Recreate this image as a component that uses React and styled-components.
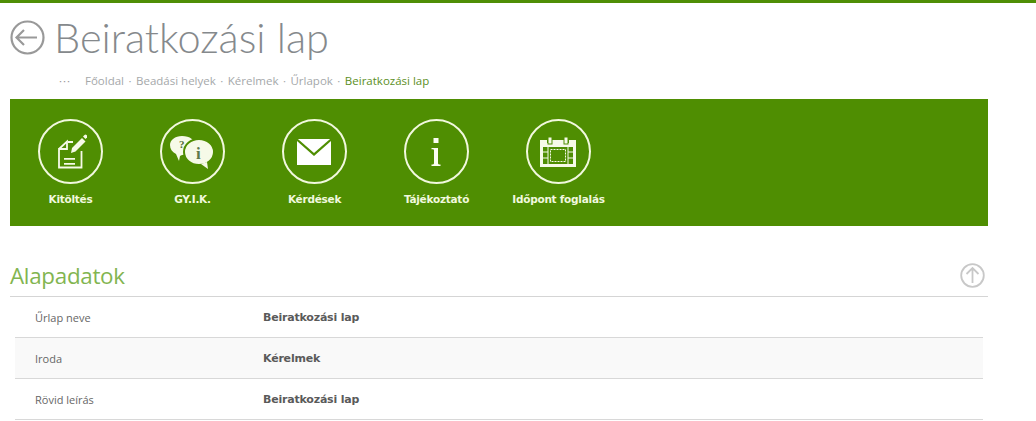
import React from 'react'
import styled, { createGlobalStyle } from 'styled-components'

const GlobalStyle = createGlobalStyle`
  html, body {
    margin: 0;
    padding: 0;
    background: #fff;
    overflow: hidden;
  }
  body {
    font-family: "Open Sans", "Liberation Sans", sans-serif;
  }
`

const Page = styled.div`
  width: 1036px;
  height: 421px;
  overflow: hidden;
  border-top: 3px solid #4f8e06;
  box-sizing: border-box;
`

const Content = styled.div`
  width: 978px;
  margin-left: 10px;
`

const Header = styled.header`
  display: flex;
  align-items: center;
  height: 68px;
  gap: 10px;
`

const BackIcon = styled.svg`
  width: 35px;
  height: 35px;
  flex: none;
`

const Title = styled.h1`
  margin: 0 0 0 -1px;
  font-family: Lato, "Open Sans", sans-serif;
  font-weight: 300;
  font-size: 41.500px;
  line-height: 70px;
  color: #85898c;
`

const Breadcrumb = styled.nav`
  display: flex;
  align-items: center;
  height: 18px;
  padding: 0 0 10px 49px;
  font-size: 11.500px;
  color: #a5a8aa;
`

const Dots = styled.span`
  width: 26px;
  letter-spacing: 1px;
  color: #999;
`

const Crumb = styled.span`
  color: ${p => (p.$active ? '#5c8f25' : '#a5a8aa')};
`

const Sep = styled.span`
  width: 12px;
  text-align: center;
  color: #a5a8aa;
`

const Band = styled.div`
  display: grid;
  grid-template-columns: repeat(5, 120px);
  column-gap: 2px;
  height: 127px;
  background: #4f8e02;
`

const Item = styled.a`
  display: flex;
  flex-direction: column;
  align-items: center;
  padding-top: 20px;
  color: #f1f8de;
  font-family: "DejaVu Sans", sans-serif;
  font-size: 10.500px;
  font-weight: 700;
  letter-spacing: -0.25px;
`

const Circle = styled.span`
  display: flex;
  align-items: center;
  justify-content: center;
  box-sizing: border-box;
  width: 65px;
  height: 65px;
  margin-bottom: 8px;
  border: 2px solid #f1f8de;
  border-radius: 50%;
`

const Label = styled.span`
  padding-left: 1px;
  line-height: 15px;
  white-space: nowrap;
`

const SectionHead = styled.div`
  display: flex;
  align-items: center;
  justify-content: space-between;
  box-sizing: border-box;
  height: 71px;
  padding-top: 28px;
  border-bottom: 1px solid #d5d5d5;
`

const SectionTitle = styled.h2`
  margin: 0;
  font-family: "Open Sans", sans-serif;
  font-weight: 400;
  font-size: 22.400px;
  letter-spacing: -0.3px;
  color: #82b550;
`

const UpIcon = styled.svg`
  width: 25px;
  height: 25px;
  margin-right: 3px;
`

const Rows = styled.div`
  margin: 0 5px;
`

const Row = styled.div`
  display: grid;
  grid-template-columns: 228px 1fr;
  align-items: center;
  box-sizing: border-box;
  height: 41px;
  padding-left: 20px;
  border-bottom: 1px solid #d8d8d8;
  background: ${p => (p.$alt ? '#f9f9f9' : '#fff')};
  font-family: "DejaVu Sans", sans-serif;
  font-size: 11px;
`

const Key = styled.span`
  font-family: "Open Sans", sans-serif;
  font-size: 11px;
  color: #666;
`

const Value = styled.span`
  font-weight: 700;
  letter-spacing: -0.2px;
  color: #5a5a5a;
`

const FillIcon = () => (
  <svg width="34" height="38" viewBox="0 0 34 38" fill="none">
    <path d="M15 9H20M6 16L14 8.500V16H6V34.500H28.500V18" stroke="#f6fae8" strokeWidth="1.800" />
    <path d="M11 25h11v1.800H11zM11 30h11v1.800H11z" fill="#f6fae8" />
    <path d="M19 15l10-10 3.500 3.500L22.500 18.500 18 20z" fill="#f6fae8" />
    <path d="M30 3.500l1.500-1.500a1.500 1.500 0 0 1 2 0l.5.5a1.500 1.500 0 0 1 0 2L32.500 6z" fill="#f6fae8" />
  </svg>
)

const FaqIcon = () => (
  <svg width="46" height="36" viewBox="0 0 46 36">
    <path d="M13 2c8 0 13 4 13 9s-5 10-13 10l-2 1-1 5-3-7c-4-2-6-5-6-9 0-5 5-9 12-9z" fill="#f6fae8" />
    <ellipse cx="30" cy="18" rx="15" ry="13" fill="#f6fae8" stroke="#4f8e02" strokeWidth="2" />
    <path d="M32 30l7 5-1-7z" fill="#f6fae8" />
    <text x="10" y="14" fontFamily="Liberation Serif" fontSize="11" fontWeight="700" fill="#4f6b3a">?</text>
    <text x="27" y="25" fontFamily="Liberation Serif" fontSize="17" fill="#5f7a4c">i</text>
  </svg>
)

const MailIcon = () => (
  <svg width="34" height="26" viewBox="0 0 36 26" preserveAspectRatio="none">
    <path d="M1 0h34L18 14z" fill="#fff" />
    <path d="M0 2l18 15L36 2v24H0z" fill="#fff" />
  </svg>
)

const InfoIcon = () => (
  <svg width="12" height="28" viewBox="0 0 12 28">
    <rect x="3.500" y="0" width="5" height="5" fill="#fbfdf2" />
    <path d="M1.500 10H8V25c0 1 .5 1.500 2.500 1.500V28H1.500V26.500c2 0 2.500-.5 2.500-1.500V12.500c0-1-.5-1.200-2.500-1.200z" fill="#fbfdf2" />
  </svg>
)

const CalendarIcon = () => (
  <svg width="36" height="30" viewBox="0 0 36 30">
    <path d="M0 3h7v3h3V3h16v3h3V3h7v27H0z" fill="#f6fae8" />
    <rect x="8" y="0" width="4" height="7" fill="#f6fae8" stroke="#4f8e02" />
    <rect x="24" y="0" width="4" height="7" fill="#f6fae8" stroke="#4f8e02" />
    <rect x="3" y="10" width="30" height="17" fill="#4f8e02" />
    <path d="M3 15h5M3 21h5M28 15h5M28 21h5M8 10v17M28 10v17" stroke="#f6fae8" strokeWidth="1" />
    <rect x="10.500" y="12.500" width="15" height="12" fill="none" stroke="#f6fae8" strokeDasharray="2 1" />
  </svg>
)

const items = [
  { label: 'Kitöltés', icon: <FillIcon /> },
  { label: 'GY.I.K.', icon: <FaqIcon /> },
  { label: 'Kérdések', icon: <MailIcon /> },
  { label: 'Tájékoztató', icon: <InfoIcon /> },
  { label: 'Időpont foglalás', icon: <CalendarIcon /> },
]

const crumbs = ['Főoldal', 'Beadási helyek', 'Kérelmek', 'Űrlapok']

const rows = [
  { key: 'Űrlap neve', value: 'Beiratkozási lap' },
  { key: 'Iroda', value: 'Kérelmek', alt: true },
  { key: 'Rövid leírás', value: 'Beiratkozási lap' },
]

const App = () => (
  <Page>
    <GlobalStyle />
    <Content>
      <Header>
        <BackIcon viewBox="0 0 35 35" fill="none" stroke="#999" strokeWidth="2.200">
          <circle cx="17.500" cy="17.500" r="16" />
          <path d="M27 17.500H7M14 10l-7.500 7.500L14 25" />
        </BackIcon>
        <Title>Beiratkozási lap</Title>
      </Header>
      <Breadcrumb>
        <Dots>···</Dots>
        {crumbs.map(c => (
          <React.Fragment key={c}>
            <Crumb>{c}</Crumb>
            <Sep>·</Sep>
          </React.Fragment>
        ))}
        <Crumb $active>Beiratkozási lap</Crumb>
      </Breadcrumb>
      <Band>
        {items.map(it => (
          <Item key={it.label}>
            <Circle>{it.icon}</Circle>
            <Label>{it.label}</Label>
          </Item>
        ))}
      </Band>
      <SectionHead>
        <SectionTitle>Alapadatok</SectionTitle>
        <UpIcon viewBox="0 0 25 25" fill="none" stroke="#c8c8c8" strokeWidth="1.800">
          <circle cx="12.500" cy="12.500" r="11.300" />
          <path d="M12.500 20V5M6.500 11l6-6 6 6" />
        </UpIcon>
      </SectionHead>
      <Rows>
        {rows.map(r => (
          <Row key={r.key} $alt={r.alt}>
            <Key>{r.key}</Key>
            <Value>{r.value}</Value>
          </Row>
        ))}
      </Rows>
    </Content>
  </Page>
)

export default App
